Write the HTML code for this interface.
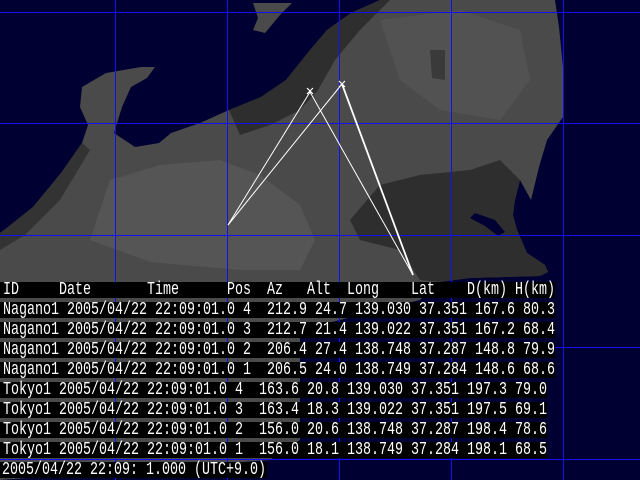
<!DOCTYPE html>
<html><head><meta charset="utf-8"><style>
html,body{margin:0;padding:0;background:#000033;width:640px;height:480px;overflow:hidden}
svg{position:absolute;left:0;top:0}
.bar{position:absolute;left:0;height:16px;background:#000}
.t{position:absolute;left:3px;font-family:"Liberation Mono",monospace;font-size:18px;line-height:16px;color:#fff;white-space:pre;transform:scaleX(0.7407);transform-origin:0 0}
</style></head><body>
<svg width="640" height="480" viewBox="0 0 640 480">
<rect width="640" height="480" fill="#000033"/>
<polygon fill="#4a4a4a" points="0,233 8,227 33,207 61,173 82,143 88,125 80,107 82,87 106,73 141,67 155,67 147,78 131,87 122,107 114,133 135,147 159,143 171,133 200,123 229,110 261,97 286,80 310,50 327,30 351,13 380,0 555,0 559,27 563,67 563,117 547,140 539,167 531,200 520,180 515,200 513,215 517,230 527,253 545,265 548,272 540,276 470,278 440,282 420,300 300,330 300,440 270,460 0,480"/>
<polygon fill="#2e2e2e" points="229,110 261,97 286,80 310,50 327,30 351,13 380,0 390,0 360,30 335,60 318,90 300,110 270,125 240,135"/>
<polygon fill="#2e2e2e" points="380,185 420,175 470,170 500,160 520,180 515,200 513,215 517,230 527,253 545,265 548,272 540,276 470,278 440,282 420,280 400,250 360,240 350,220"/>
<polygon fill="#333" points="0,233 8,227 33,207 61,173 82,143 90,150 60,200 25,235 0,250"/>
<polygon fill="#555" points="110,180 160,165 220,160 260,175 300,205 315,240 300,270 240,270 150,262 90,240"/>
<polygon fill="#525252" points="380,20 460,10 520,30 530,80 500,120 440,110 400,80"/>
<polygon fill="#3a3a3a" points="430,50 445,50 445,80 432,78"/>
<polygon fill="#4a4a4a" points="253,3 292,3 280,15 265,33 253,30 258,18"/>
<polygon fill="#000033" points="475,213 495,220 505,232 498,236 485,226 470,218"/>
<g fill="#1010f0" shape-rendering="crispEdges">
<rect x="115" y="0" width="1" height="480"/><rect x="227" y="0" width="1" height="480"/><rect x="339" y="0" width="1" height="480"/><rect x="451" y="0" width="1" height="480"/><rect x="563" y="0" width="1" height="480"/>
<rect x="0" y="12" width="640" height="1"/><rect x="0" y="123" width="640" height="1"/><rect x="0" y="235" width="640" height="1"/><rect x="0" y="347" width="640" height="1"/><rect x="0" y="459" width="640" height="1"/>
</g>
<g stroke="#fff" fill="none">
<line x1="228" y1="225" x2="310" y2="92" stroke-width="1"/>
<line x1="228" y1="225" x2="342" y2="84" stroke-width="1"/>
<line x1="310" y1="92" x2="413" y2="275" stroke-width="1"/>
<line x1="342" y1="84" x2="413" y2="275" stroke-width="1.8"/>
<path d="M307 88l6 6M313 88l-6 6M339 81l6 6M345 81l-6 6" stroke-width="1.2"/>
</g>
</svg>
<div class="bar" style="top:282px;width:555px"></div>
<div class="bar" style="top:302px;width:555px"></div>
<div class="bar" style="top:322px;width:555px"></div>
<div class="bar" style="top:342px;width:555px"></div>
<div class="bar" style="top:362px;width:555px"></div>
<div class="bar" style="top:382px;width:547px"></div>
<div class="bar" style="top:402px;width:547px"></div>
<div class="bar" style="top:422px;width:547px"></div>
<div class="bar" style="top:442px;width:547px"></div>
<div class="bar" style="top:462px;width:267px"></div>
<div class="t" style="top:282px">ID     Date       Time      Pos  Az   Alt  Long    Lat    D(km) H(km)</div>
<div class="t" style="top:302px">Nagano1 2005/04/22 22:09:01.0 4  212.9 24.7 139.030 37.351 167.6 80.3</div>
<div class="t" style="top:322px">Nagano1 2005/04/22 22:09:01.0 3  212.7 21.4 139.022 37.351 167.2 68.4</div>
<div class="t" style="top:342px">Nagano1 2005/04/22 22:09:01.0 2  206.4 27.4 138.748 37.287 148.8 79.9</div>
<div class="t" style="top:362px">Nagano1 2005/04/22 22:09:01.0 1  206.5 24.0 138.749 37.284 148.6 68.6</div>
<div class="t" style="top:382px">Tokyo1 2005/04/22 22:09:01.0 4  163.6 20.8 139.030 37.351 197.3 79.0</div>
<div class="t" style="top:402px">Tokyo1 2005/04/22 22:09:01.0 3  163.4 18.3 139.022 37.351 197.5 69.1</div>
<div class="t" style="top:422px">Tokyo1 2005/04/22 22:09:01.0 2  156.0 20.6 138.748 37.287 198.4 78.6</div>
<div class="t" style="top:442px">Tokyo1 2005/04/22 22:09:01.0 1  156.0 18.1 138.749 37.284 198.1 68.5</div>
<div class="t" style="top:462px;left:2px">2005/04/22 22:09: 1.000 (UTC+9.0)</div>
</body></html>
